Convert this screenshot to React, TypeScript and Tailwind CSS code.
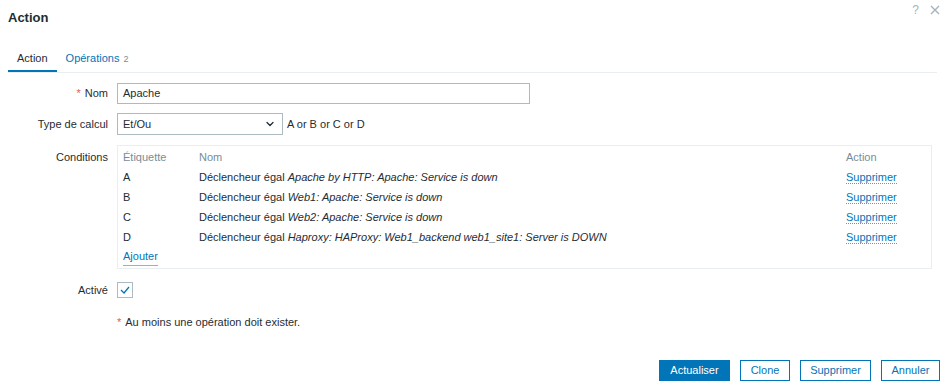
import { ChevronDown } from "lucide-react";

const conditions = [
    { label: "A", name: "Apache by HTTP: Apache: Service is down" },
    { label: "B", name: "Web1: Apache: Service is down" },
    { label: "C", name: "Web2: Apache: Service is down" },
    { label: "D", name: "Haproxy: HAProxy: Web1_backend web1_site1: Server is DOWN" },
];

function Label({ children, required }: { children: React.ReactNode; required?: boolean }) {
    return (
        <div className="w-[108px] shrink-0 text-right">
            {required && <span className="text-[#e45959] mr-1">*</span>}
            {children}
        </div>
    );
}

export default function App() {
    return (
        <div className="relative w-[945px] h-[387px] bg-white text-[11px] text-[#1f2c33] font-['Liberation_Sans',Arial,sans-serif] flex flex-col overflow-hidden">
            <div className="absolute top-[1px] right-[5px] flex items-center gap-[11px] text-[#a6b3ba]">
                <span className="text-[12px]">?</span>
                <svg width="10" height="10" viewBox="0 0 10 10" className="stroke-[#a6b3ba]" strokeWidth="1.4">
                    <path d="M1 1 L9 9 M9 1 L1 9" />
                </svg>
            </div>

            <header className="h-[34px] flex items-center px-2">
                <h1 className="text-[13px] font-bold leading-[17px]">Action</h1>
            </header>

            <nav className="mt-[10px] mx-2 flex border-b border-[#ebeef0]">
                <div className="px-[9px] pt-[7px] pb-[5px] leading-[14px] border-b-2 border-[#0275b8]">Action</div>
                <div className="px-[9px] pt-[7px] pb-[5px] leading-[14px] text-[#0275b8]">
                    Opérations <span className="ml-px text-[#768d99] text-[9px]">2</span>
                </div>
            </nav>

            <div className="flex items-center gap-[9px] mt-[10px]">
                <Label required>Nom</Label>
                <div className="w-[413px] h-[21px] border border-[#acbbc2] px-[5px] flex items-center">Apache</div>
            </div>

            <div className="flex items-center gap-[9px] mt-[9px]">
                <Label>Type de calcul</Label>
                <div className="w-[166px] h-[22px] border border-[#acbbc2] pl-[5px] pr-[6px] flex items-center justify-between">
                    <span>Et/Ou</span>
                    <ChevronDown className="w-3 h-3" strokeWidth={2.5} />
                </div>
                <span className="-ml-[5px]">A or B or C or D</span>
            </div>

            <div className="flex items-start gap-[9px] mt-[10px]">
                <div className="pt-[4px]">
                    <Label>Conditions</Label>
                </div>
                <div className="w-[815px] border border-[#ebeef0] px-[5px] py-px">
                    <div className="grid grid-cols-[76px_1fr_80px] h-[20px] items-center text-[#768d99]">
                        <span>Étiquette</span>
                        <span>Nom</span>
                        <span>Action</span>
                    </div>
                    {conditions.map((c) => (
                        <div key={c.label} className="grid grid-cols-[76px_1fr_80px] h-[20px] items-center">
                            <span>{c.label}</span>
                            <span>
                                Déclencheur égal <em>{c.name}</em>
                            </span>
                            <span>
                                <a className="text-[#0275b8] border-b border-dotted border-[#4f9fd0]">Supprimer</a>
                            </span>
                        </div>
                    ))}
                    <div className="h-[20px] flex items-center">
                        <a className="text-[#0275b8] border-b border-[#7fb9dc]">Ajouter</a>
                    </div>
                </div>
            </div>

            <div className="flex items-center gap-[9px] mt-[13px]">
                <Label>Activé</Label>
                <div className="w-4 h-4 border border-[#acbbc2] flex items-center justify-center">
                    <svg width="10" height="8" viewBox="0 0 10 8" fill="none" stroke="#0275b8" strokeWidth="1.3">
                        <path d="M1 4 L4 7 L9 1" />
                    </svg>
                </div>
            </div>

            <div className="ml-[117px] mt-[16px] leading-[14px]">
                <span className="text-[#e45959] mr-1">*</span>Au moins une opération doit exister.
            </div>

            <footer className="mt-auto mb-[6px] pr-[5px] flex justify-end gap-[10px]">
                <button className="h-[21px] w-[71px] bg-[#0275b8] text-white border border-[#0275b8]">Actualiser</button>
                <button className="h-[21px] w-[50px] text-[#0275b8] border border-[#0275b8]">Clone</button>
                <button className="h-[21px] w-[71px] text-[#0275b8] border border-[#0275b8]">Supprimer</button>
                <button className="h-[21px] w-[59px] text-[#0275b8] border border-[#0275b8]">Annuler</button>
            </footer>
        </div>
    );
}
